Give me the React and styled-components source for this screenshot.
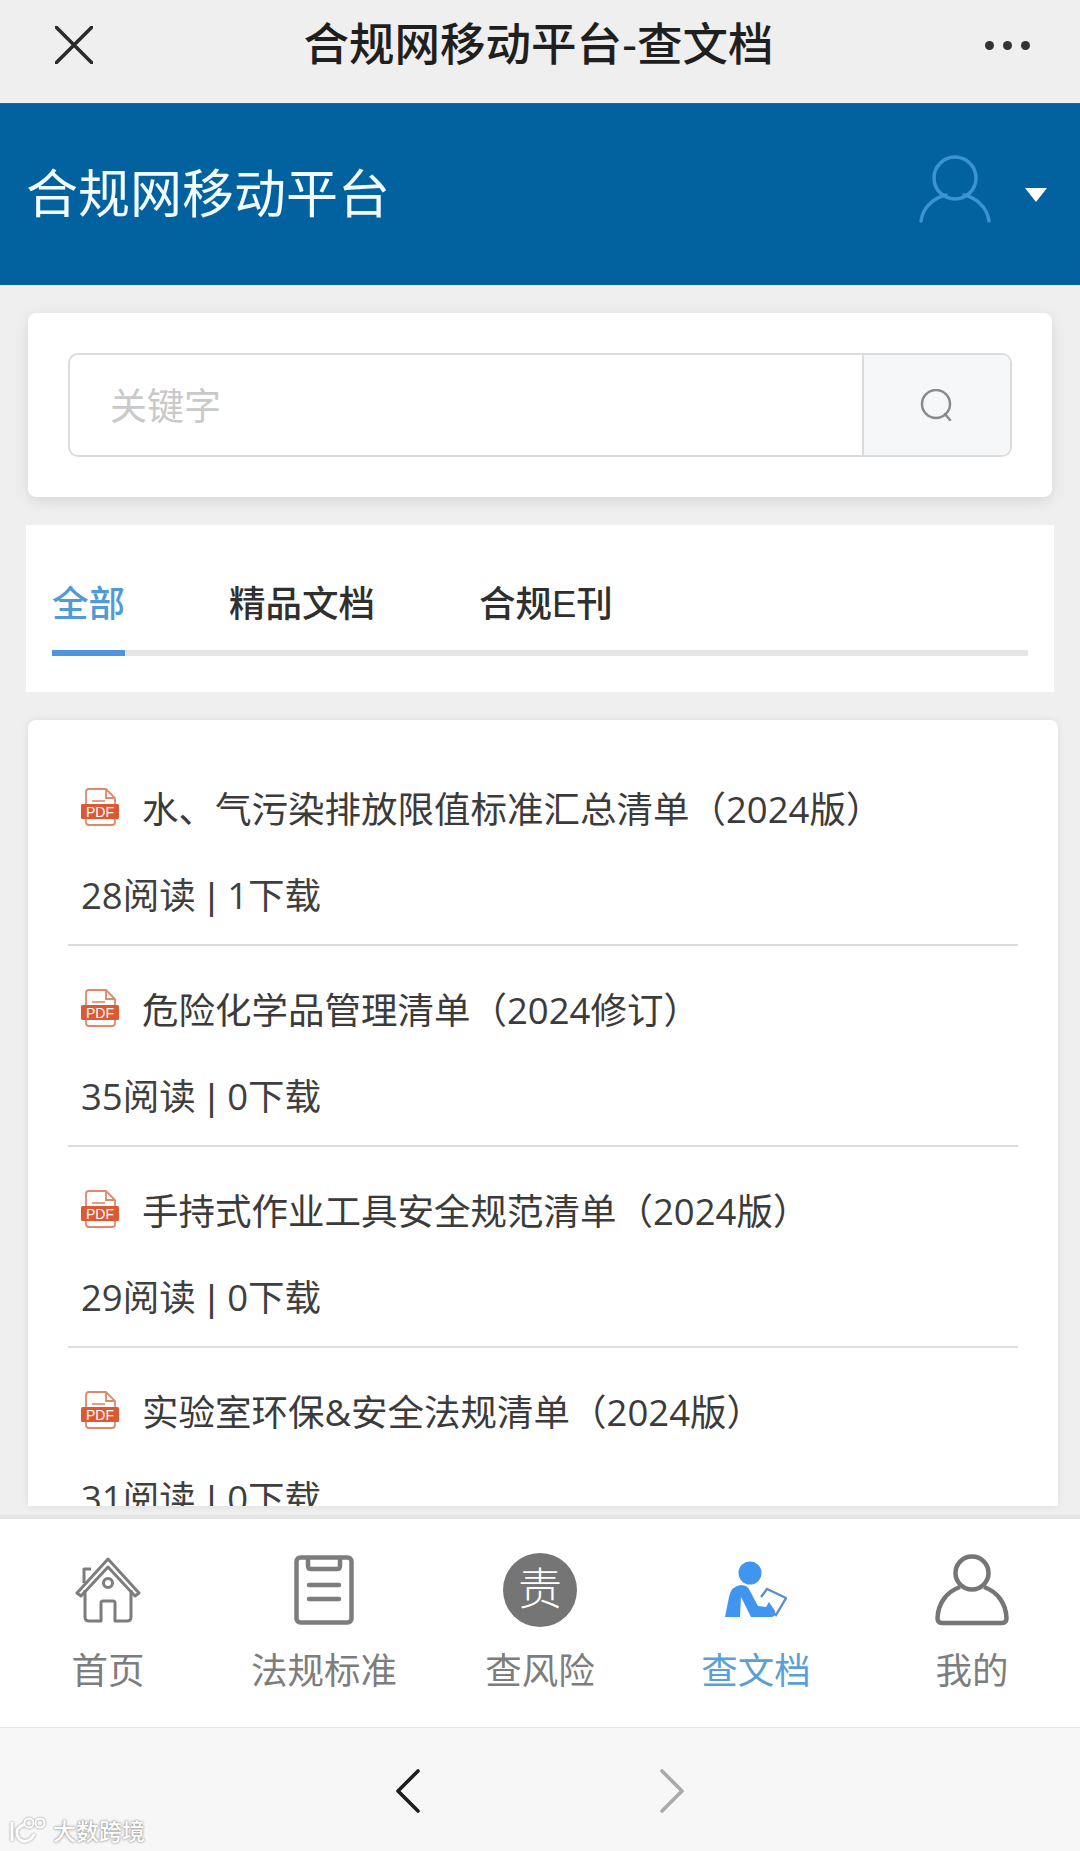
// App.jsx
import React from 'react';
import styled, { createGlobalStyle } from 'styled-components';

const GlobalStyle = createGlobalStyle`
  html, body {
    margin: 0;
    padding: 0;
    background: #efefef;
  }
  * {
    box-sizing: border-box;
  }
  body {
    font-family: "Liberation Sans", "Noto Sans CJK SC", sans-serif;
  }
`;

const Page = styled.div`
  position: relative;
  width: 1080px;
  height: 1851px;
  display: flex;
  flex-direction: column;
  overflow: hidden;
  background: #efefef;
`;

const TopBar = styled.div`
  height: 103px;
  flex: none;
  display: grid;
  grid-template-columns: 1fr auto 1fr;
  align-items: center;
  padding: 0 50px 13px 55px;
  background: #efefef;
`;

const TopTitle = styled.div`
  font-size: 45.5px;
  font-weight: 500;
  color: #1f1f1f;
  line-height: 60px;
  margin: 2px 0 0 -8px;
`;

const Dots = styled.div`
  justify-self: end;
  display: flex;
  gap: 9px;
`;

const Dot = styled.span`
  width: 9px;
  height: 9px;
  border-radius: 50%;
  background: #333;
`;

const Header = styled.header`
  height: 182px;
  flex: none;
  display: flex;
  align-items: center;
  justify-content: space-between;
  padding: 0 33px 0 26px;
  background: #02619f;
  border-top: 1px solid #0a6ea8;
`;

const HeaderTitle = styled.h1`
  margin: 0;
  font-size: 52px;
  font-weight: 400;
  color: #f2fbff;
  line-height: 70px;
`;

const UserArea = styled.div`
  display: flex;
  align-items: center;
  gap: 34px;
  svg {
    margin-bottom: 12px;
  }
`;

const Caret = styled.span`
  width: 0;
  height: 0;
  border-left: 11px solid transparent;
  border-right: 11px solid transparent;
  border-top: 14px solid #fff;
`;

const Main = styled.main`
  flex: 1;
  min-height: 0;
  display: flex;
  flex-direction: column;
  padding: 28px 24px 9px 26px;
`;

const SearchCard = styled.section`
  flex: none;
  height: 184px;
  margin: 0 4px 28px 2px;
  padding: 40px 40px 0;
  background: #fff;
  border-radius: 8px;
  box-shadow: 0 4px 14px rgba(0, 0, 0, 0.1);
`;

const SearchBox = styled.div`
  display: flex;
  height: 104px;
  border: 2px solid #dcdcdc;
  border-radius: 10px;
  overflow: hidden;
`;

const SearchInput = styled.div`
  flex: 1;
  display: flex;
  align-items: center;
  padding: 0 0 3px 40px;
  font-size: 37px;
  color: #c9c9c9;
`;

const SearchButton = styled.div`
  width: 148px;
  display: flex;
  align-items: center;
  justify-content: center;
  background: #f6f7f9;
  border-left: 2px solid #dcdcdc;
`;

const TabsPanel = styled.nav`
  flex: none;
  height: 167px;
  margin: 0 2px 28px 0;
  padding: 54px 26px 0;
  background: #fff;
`;

const TabRow = styled.div`
  display: flex;
  gap: 104px;
  height: 77px;
  border-bottom: 6px solid #e6e6e6;
`;

const Tab = styled.div`
  height: 77px;
  font-size: 36.5px;
  font-weight: 500;
  line-height: 52px;
  color: ${(p) => (p.$active ? '#519ad8' : '#2f2f2f')};
  border-bottom: 6px solid ${(p) => (p.$active ? '#4f94dc' : 'transparent')};
`;

const ListCard = styled.section`
  flex: 1;
  min-height: 0;
  margin: 0 -2px 0 2px;
  padding: 25px 40px 0;
  overflow: hidden;
  background: #fff;
  border-radius: 8px 8px 0 0;
  box-shadow: 0 0 8px rgba(0, 0, 0, 0.08);
`;

const DocItem = styled.article`
  padding: 37px 0 24px 13px;
  border-bottom: 2px solid #dddddd;
`;

const DocTitle = styled.div`
  display: flex;
  align-items: center;
  gap: 23px;
  height: 50px;
  font-family: "Open Sans", "Noto Sans CJK SC", sans-serif;
  font-size: 36.5px;
  color: #3b3b3b;
`;

const DocMeta = styled.div`
  margin-top: 38px;
  height: 50px;
  line-height: 50px;
  font-family: "Open Sans", "Noto Sans CJK SC", sans-serif;
  font-size: 36.5px;
  color: #3f3f3f;
`;

const MetaSep = styled.span`
  margin: 0 11px;
  font-family: "Liberation Sans", sans-serif;
`;

const TabBar = styled.nav`
  flex: none;
  height: 213px;
  display: grid;
  grid-template-columns: repeat(5, 1fr);
  padding-top: 33px;
  background: #fff;
  border-top: 4px solid #e4e4e4;
  border-bottom: 1px solid #e6e6e6;
`;

const TabItem = styled.div`
  display: flex;
  flex-direction: column;
  align-items: center;
  color: ${(p) => (p.$active ? '#5a9fd8' : '#7d7d7d')};
`;

const TabIcon = styled.div`
  height: 76px;
  display: flex;
  align-items: center;
  justify-content: center;
`;

const TabLabel = styled.div`
  margin-top: 20px;
  font-size: 36.5px;
  line-height: 48px;
`;

const RiskBadge = styled.div`
  width: 74px;
  height: 74px;
  border-radius: 50%;
  display: flex;
  align-items: center;
  justify-content: center;
  background: #757575;
  color: #fff;
  font-size: 44px;
  font-weight: 300;
  line-height: 1;
`;

const BottomBar = styled.div`
  flex: none;
  height: 123px;
  display: flex;
  justify-content: center;
  align-items: center;
  gap: 240px;
  padding-top: 2px;
  background: #f7f7f7;
`;

const Watermark = styled.div`
  position: absolute;
  left: 9px;
  bottom: 4px;
  display: flex;
  align-items: center;
  gap: 6px;
  font-size: 23px;
  font-weight: 500;
  color: #fff;
  text-shadow: 0 0 3px #8a8a8a, 0 0 1px #8a8a8a;
`;

function CloseIcon() {
  return (
    <svg width="38" height="38" viewBox="0 0 38 38">
      <path d="M1 1 L37 37 M37 1 L1 37" stroke="#2b2b2b" strokeWidth="3.5" strokeLinecap="round" />
    </svg>
  );
}

function UserOutline() {
  return (
    <svg width="72" height="68" viewBox="0 0 72 68" fill="none" stroke="#3a94d2" strokeWidth="3.5">
      <ellipse cx="36" cy="23" rx="21" ry="21" />
      <path d="M2 66 C4 50 18 42 27 40 M70 66 C68 50 54 42 45 40" strokeLinecap="round" />
    </svg>
  );
}

function SearchIcon() {
  return (
    <svg width="34" height="32" viewBox="0 0 34 32" fill="none" stroke="#8b8b8b" strokeWidth="2.5">
      <circle cx="16" cy="15" r="14" />
      <path d="M25 25 L30 31" strokeLinecap="round" />
    </svg>
  );
}

function PdfIcon() {
  return (
    <svg width="38" height="38" viewBox="0 0 38 38" style={{ flex: 'none' }}>
      <path
        d="M5 17 V4 Q5 1 8 1 H25 L34 10 V17 M25 1 V10 H34 M5 30 V34 Q5 37 8 37 H31 Q34 37 34 34 V30"
        fill="none"
        stroke="#dd8a6c"
        strokeWidth="1.8"
      />
      <path d="M11 13 H24" stroke="#dd8a6c" strokeWidth="1.6" />
      <rect x="0" y="16" width="38" height="15" rx="1.5" fill="#dc5a33" />
      <text x="19" y="28.5" textAnchor="middle" fontSize="14" fontFamily="Liberation Sans" fill="#fff">PDF</text>
    </svg>
  );
}

function HomeIcon() {
  return (
    <svg width="66" height="66" viewBox="0 0 66 66" fill="none" stroke="#7d7d7d" strokeWidth="3" strokeLinejoin="round">
      <path d="M2 36 L33 2 L64 36 L60 39 L33 10 L6 39 Z" />
      <path d="M10 33 V60 Q10 64 14 64 H26 V46 Q26 44 28 44 H38 Q40 44 40 46 V64 H52 Q56 64 56 60 V33" />
      <path d="M9 26 V12 H16" />
      <circle cx="33" cy="26" r="4.5" />
    </svg>
  );
}

function LawIcon() {
  return (
    <svg width="60" height="70" viewBox="0 0 60 70" fill="none" stroke="#7d7d7d" strokeWidth="4.5">
      <rect x="2.5" y="2.5" width="55" height="65" rx="4" />
      <path d="M14 3 V11 Q14 14 17 14 H43 Q46 14 46 11 V3" />
      <path d="M15 30 H45 M15 44 H45" strokeLinecap="round" />
    </svg>
  );
}

function ReaderIcon() {
  return (
    <svg width="62" height="58" viewBox="0 0 62 58">
      <circle cx="25" cy="12" r="11.5" fill="#4096ee" />
      <path
        d="M0 56 L4 36 Q6 25 16 24 Q23 24 25 30 L33 45 L41 46 L44 41 L50 50 Q51 56 46 56 H26 L16 36 L15 56 Z"
        fill="#4096ee"
      />
      <path d="M36 36 L42 28 L61 37 L51 54 L47 51" fill="none" stroke="#5c8fc9" strokeWidth="2.4" />
    </svg>
  );
}

function ProfileIcon() {
  return (
    <svg width="74" height="72" viewBox="0 0 74 72" fill="none" stroke="#757575" strokeWidth="4.5">
      <circle cx="37" cy="19" r="16.5" />
      <path d="M25 33 C11 38 3 50 2.5 64 Q2.5 69 7 69 H67 Q71.5 69 71.5 64 C71 50 63 38 49 33" />
    </svg>
  );
}

function Chevron({ color, flip }) {
  return (
    <svg width="24" height="44" viewBox="0 0 24 44" style={flip ? { transform: 'scaleX(-1)' } : undefined}>
      <path d="M22 2 L2 22 L22 42" fill="none" stroke={color} strokeWidth="3.6" strokeLinecap="round" strokeLinejoin="round" />
    </svg>
  );
}

function WatermarkLogo() {
  return (
    <svg width="38" height="28" viewBox="0 0 38 28" fill="none" stroke="#fff" strokeWidth="3" style={{ filter: 'drop-shadow(0 0 1px #8a8a8a)' }}>
      <path d="M3 6 V25 M16 8 Q6 12 8 19 Q12 28 20 24 Q24 22 25 18" />
      <circle cx="20" cy="7" r="4.5" strokeWidth="2" />
      <circle cx="31" cy="7" r="4.5" strokeWidth="2" />
    </svg>
  );
}

const docs = [
  { title: '水、气污染排放限值标准汇总清单（2024版）', read: 28, download: 1 },
  { title: '危险化学品管理清单（2024修订）', read: 35, download: 0 },
  { title: '手持式作业工具安全规范清单（2024版）', read: 29, download: 0 },
  { title: '实验室环保&安全法规清单（2024版）', read: 31, download: 0 },
];

const navItems = [
  { label: '首页', icon: <HomeIcon /> },
  { label: '法规标准', icon: <LawIcon /> },
  { label: '查风险', icon: <RiskBadge>责</RiskBadge> },
  { label: '查文档', icon: <ReaderIcon />, active: true },
  { label: '我的', icon: <ProfileIcon /> },
];

export default function App() {
  return (
    <Page>
      <GlobalStyle />
      <TopBar>
        <CloseIcon />
        <TopTitle>合规网移动平台-查文档</TopTitle>
        <Dots>
          <Dot />
          <Dot />
          <Dot />
        </Dots>
      </TopBar>

      <Header>
        <HeaderTitle>合规网移动平台</HeaderTitle>
        <UserArea>
          <UserOutline />
          <Caret />
        </UserArea>
      </Header>

      <Main>
        <SearchCard>
          <SearchBox>
            <SearchInput>关键字</SearchInput>
            <SearchButton>
              <SearchIcon />
            </SearchButton>
          </SearchBox>
        </SearchCard>

        <TabsPanel>
          <TabRow>
            <Tab $active>全部</Tab>
            <Tab>精品文档</Tab>
            <Tab>合规E刊</Tab>
          </TabRow>
        </TabsPanel>

        <ListCard>
          {docs.map((doc) => (
            <DocItem key={doc.title}>
              <DocTitle>
                <PdfIcon />
                {doc.title}
              </DocTitle>
              <DocMeta>
                {doc.read}阅读<MetaSep>|</MetaSep>{doc.download}下载
              </DocMeta>
            </DocItem>
          ))}
        </ListCard>
      </Main>

      <TabBar>
        {navItems.map((item) => (
          <TabItem key={item.label} $active={item.active}>
            <TabIcon>{item.icon}</TabIcon>
            <TabLabel>{item.label}</TabLabel>
          </TabItem>
        ))}
      </TabBar>

      <BottomBar>
        <Chevron color="#1e1e1e" />
        <Chevron color="#aaaaaa" flip />
      </BottomBar>

      <Watermark>
        <WatermarkLogo />
        大数跨境
      </Watermark>
    </Page>
  );
}
